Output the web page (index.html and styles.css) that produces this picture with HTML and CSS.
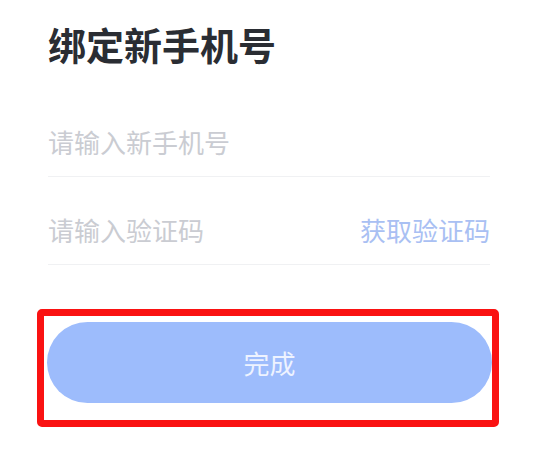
FILE: index.html
```html
<!DOCTYPE html>
<html lang="zh-CN">
<head>
<meta charset="utf-8">
<title>绑定新手机号</title>
<link rel="stylesheet" href="styles.css">
</head>
<body>
<div class="page">
  <h1 class="title">绑定新手机号</h1>
  <div class="fields">
    <div class="row">
      <span class="placeholder">请输入新手机号</span>
    </div>
    <div class="row">
      <span class="placeholder">请输入验证码</span>
      <span class="code-link">获取验证码</span>
    </div>
  </div>
  <div class="highlight">
    <div class="submit">完成</div>
  </div>
</div>
</body>
</html>
```

FILE: styles.css
```css
html, body {
  margin: 0;
  padding: 0;
  background: #ffffff;
}

.page {
  width: 550px;
  height: 452px;
  font-family: "Noto Sans CJK SC", "Noto Sans", sans-serif;
  overflow: hidden;
}

.title {
  margin: 21px 0 22px 48px;
  font-size: 38px;
  line-height: 46px;
  font-weight: 700;
  color: #2a2d33;
}

.fields {
  margin: 0 60px 0 48px;
}

.row {
  height: 88px;
  box-sizing: border-box;
  border-bottom: 1px solid #f0f1f3;
  display: flex;
  align-items: flex-end;
  justify-content: space-between;
  padding-bottom: 21px;
}

.placeholder {
  font-size: 26px;
  line-height: 26px;
  color: #caccd2;
}

.code-link {
  font-size: 26px;
  line-height: 26px;
  color: #a9c0f3;
}

.highlight {
  margin: 44px 0 0 37px;
  width: 462px;
  box-sizing: border-box;
  border: 7px solid #fa1212;
  border-radius: 5px;
  padding: 6px 0 17px 3px;
}

.submit {
  height: 81px;
  border-radius: 41px;
  background: #9dbcfc;
  color: #eef3ff;
  font-size: 26px;
  display: flex;
  align-items: center;
  justify-content: center;
}
```
